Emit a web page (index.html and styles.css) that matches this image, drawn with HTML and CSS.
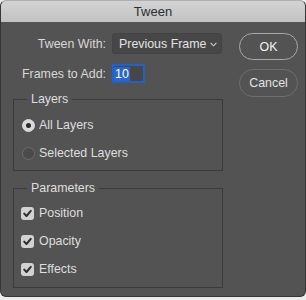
FILE: index.html
```html
<!DOCTYPE html>
<html>
<head>
<meta charset="utf-8">
<link rel="stylesheet" href="styles.css">
</head>
<body>
<div class="window">
  <div class="titlebar">Tween</div>
  <div class="content">
    <div class="main">
      <div class="form">
        <span class="lbl">Tween With:</span>
        <div class="popup"><span>Previous Frame</span><svg class="chev" width="7" height="5" viewBox="0 0 7 5"><polyline points="0.6,0.8 3.5,3.8 6.4,0.8" fill="none" stroke="#cfcfcf" stroke-width="1.1"/></svg></div>
        <span class="lbl">Frames to Add:</span>
        <div class="field"><span class="sel">10</span></div>
      </div>
      <fieldset class="group layers">
        <legend>Layers</legend>
        <div class="opt"><span class="radio on"></span>All Layers</div>
        <div class="opt"><span class="radio"></span>Selected Layers</div>
      </fieldset>
      <fieldset class="group params">
        <legend>Parameters</legend>
        <div class="opt chk"><span class="box"><svg width="13" height="13" viewBox="0 0 13 13"><polyline points="3.2,6.6 5.5,9 9.8,3.8" fill="none" stroke="#2f2f2f" stroke-width="2" stroke-linecap="round" stroke-linejoin="round"/></svg></span>Position</div>
        <div class="opt chk"><span class="box"><svg width="13" height="13" viewBox="0 0 13 13"><polyline points="3.2,6.6 5.5,9 9.8,3.8" fill="none" stroke="#2f2f2f" stroke-width="2" stroke-linecap="round" stroke-linejoin="round"/></svg></span>Opacity</div>
        <div class="opt chk"><span class="box"><svg width="13" height="13" viewBox="0 0 13 13"><polyline points="3.2,6.6 5.5,9 9.8,3.8" fill="none" stroke="#2f2f2f" stroke-width="2" stroke-linecap="round" stroke-linejoin="round"/></svg></span>Effects</div>
      </fieldset>
    </div>
    <div class="side">
      <button class="btn ok">OK</button>
      <button class="btn cancel">Cancel</button>
    </div>
  </div>
</div>
</body>
</html>
```
FILE: styles.css
```css
html { background: #ececec; }
body {
  margin: 0;
  font-family: "Liberation Sans", Arial, sans-serif;
  font-size: 12.4px;
  color: #dedede;
}
.window {
  box-sizing: border-box;
  width: 306px;
  height: 297px;
  background: #535353;
  border: 1px solid #363636;
  border-top-color: #b0b0b0;
  border-radius: 6px;
  overflow: hidden;
}
.titlebar {
  height: 21px;
  line-height: 22px;
  text-align: center;
  font-size: 13px;
  color: #2e2e2e;
  background: linear-gradient(#d3d3d3, #c2c2c2);
}
.content {
  display: flex;
  padding: 11px 0 0 12px;
}
.main {
  width: 210px;
}
.form {
  display: grid;
  grid-template-columns: 93px auto;
  column-gap: 6px;
  row-gap: 10px;
  align-items: center;
}
.lbl {
  text-align: right;
  color: #d8d8d8;
}
.popup {
  box-sizing: border-box;
  height: 21px;
  width: 110px;
  display: flex;
  align-items: center;
  justify-content: space-between;
  padding: 0 5px 0 7px;
  background: #474747;
  border-radius: 4px;
  box-shadow: inset 0 0 0 1px #434343;
  color: #e2e2e2;
}
.chev { margin-top: 1px; }
.field {
  box-sizing: border-box;
  width: 33px;
  height: 19px;
  border: 2px solid #1f62cc;
  background: #474747;
  display: flex;
  align-items: center;
  padding-left: 0;
}
.sel {
  background: #2a66cc;
  color: #ffffff;
  line-height: 14px;
  padding: 0 1px 0 1px;
}
.group {
  margin: 8px 0 0 0;
  min-width: 0;
  border: 1px solid #3b3b3b;
  padding: 4px 0 3px 8px;
}
.group.params {
  margin-top: 9px;
  padding: 3px 0 4px 7px;
}
.group legend {
  padding: 0 4px;
  margin-left: 5px;
  line-height: 16px;
  color: #dedede;
}
.group.params legend { margin-left: 6px; }
.opt {
  height: 28px;
  display: flex;
  align-items: center;
  gap: 4px;
}
.opt.chk { gap: 5px; }
.radio {
  box-sizing: border-box;
  width: 13px;
  height: 13px;
  border-radius: 50%;
  background: #4b4b4b;
  border: 1px solid #6c6c6c;
  display: flex;
  align-items: center;
  justify-content: center;
}
.radio.on {
  background: #d9d9d9;
  border-color: #d9d9d9;
}
.radio.on::after {
  content: "";
  width: 5px;
  height: 5px;
  border-radius: 50%;
  background: #2b2b2b;
}
.box {
  width: 13px;
  height: 13px;
  border-radius: 3px;
  background: #d2d2d2;
  display: flex;
}
.side {
  margin-left: 16px;
  width: 59px;
  display: flex;
  flex-direction: column;
  gap: 9px;
}
.btn {
  box-sizing: border-box;
  height: 27px;
  width: 59px;
  border-radius: 14px;
  background: #535353;
  font-family: inherit;
  font-size: 12.4px;
  padding: 0;
}
.btn.ok {
  border: 1px solid #a8a8a8;
  color: #f2f2f2;
}
.btn.cancel {
  height: 28px;
  border: 1px solid #6e6e6e;
  color: #e2e2e2;
}
```
